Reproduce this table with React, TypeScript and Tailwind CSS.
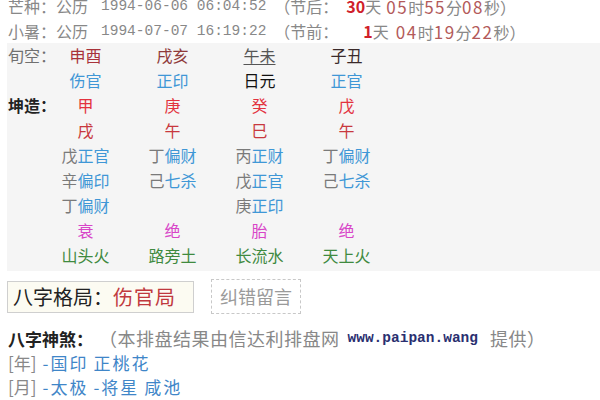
import React from "react";

const sans = { fontFamily: '"Noto Sans CJK SC", "Noto Sans", sans-serif' };

type Cell = React.ReactNode;

function Row({ label, cells, labelBold }: { label?: string; cells: Cell[]; labelBold?: boolean }) {
  return (
    <div className="grid h-[25px] items-center grid-cols-[35px_87px_87px_87px_87px]">
      <div className={`whitespace-nowrap pl-[1px] ${labelBold ? "font-bold text-[#222]" : "text-[#707070]"}`}>{label ?? ""}</div>
      {cells.map((c, i) => (
        <div key={i} className="text-center whitespace-nowrap">
          {c}
        </div>
      ))}
    </div>
  );
}

const B = ({ children }: { children: React.ReactNode }) => <span className="text-[#3f97d6]">{children}</span>;
const G = ({ children }: { children: React.ReactNode }) => <span className="text-[#7a7a7a]">{children}</span>;
const Hid = ({ s, t }: { s: string; t: string }) => (
  <span>
    <G>{s}</G>
    <B>{t}</B>
  </span>
);

const D = ({ children }: { children: React.ReactNode }) => (
  <span className="text-[#b35a5a] text-[17px] tracking-[1.5px]">{children}</span>
);

export default function App() {
  return (
    <div className="w-[600px] h-[400px] overflow-hidden bg-white text-[16px] leading-[25px]" style={sans}>
      <div className="-mt-[6px]">
        <div className="h-[25px] pl-[8px] whitespace-nowrap text-[#888] flex items-center">
          <span>芒种：公历</span>
          <span className="font-['Liberation_Mono'] text-[14.5px] ml-[13px]">1994-06-06 06:04:52</span>
          <span className="ml-[8px]">（节后：</span>
          <span className="ml-[8px] font-bold text-[#d0202a]">30</span>
          <span>天</span>
          <span className="ml-[5px]">
            <D>05</D>时<D>55</D>分<D>08</D>秒）
          </span>
        </div>
        <div className="h-[25px] pl-[8px] whitespace-nowrap text-[#888] flex items-center">
          <span>小暑：公历</span>
          <span className="font-['Liberation_Mono'] text-[14.5px] ml-[13px]">1994-07-07 16:19:22</span>
          <span className="ml-[8px]">（节前：</span>
          <span className="ml-[25px] font-bold text-[#d0202a]">1</span>
          <span>天</span>
          <span className="ml-[7px]">
            <D>04</D>时<D>19</D>分<D>22</D>秒）
          </span>
        </div>
      </div>
      <div className="ml-[7px] mt-[-1px] bg-[#f5f5f5] pb-[3px]">
        <Row
          label="旬空："
          cells={[
            <span className="text-[#a8323a]">申酉</span>,
            <span className="text-[#8f3a3a]">戌亥</span>,
            <span className="text-[#555] underline underline-offset-2">午未</span>,
            <span className="text-[#3a2a2a]">子丑</span>,
          ]}
        />
        <Row
          cells={[
            <B>伤官</B>,
            <B>正印</B>,
            <span className="text-[#111]">日元</span>,
            <B>正官</B>,
          ]}
        />
        <Row
          label="坤造："
          labelBold
          cells={["甲", "庚", "癸", "戊"].map((c) => (
            <span className="text-[#e3323e]">{c}</span>
          ))}
        />
        <Row
          cells={["戌", "午", "巳", "午"].map((c) => (
            <span className="text-[#c8383e]">{c}</span>
          ))}
        />
        <Row
          cells={[
            <Hid s="戊" t="正官" />,
            <Hid s="丁" t="偏财" />,
            <Hid s="丙" t="正财" />,
            <Hid s="丁" t="偏财" />,
          ]}
        />
        <Row
          cells={[
            <Hid s="辛" t="偏印" />,
            <Hid s="己" t="七杀" />,
            <Hid s="戊" t="正官" />,
            <Hid s="己" t="七杀" />,
          ]}
        />
        <Row cells={[<Hid s="丁" t="偏财" />, "", <Hid s="庚" t="正印" />, ""]} />
        <Row
          cells={["衰", "绝", "胎", "绝"].map((c) => (
            <span className="text-[#d845c8]">{c}</span>
          ))}
        />
        <Row
          cells={["山头火", "路旁土", "长流水", "天上火"].map((c) => (
            <span className="text-[#3f8a3f]">{c}</span>
          ))}
        />
      </div>
      <div className="flex items-center gap-[17px] ml-[7px] mt-[8px]">
        <div className="h-[32px] w-[187px] border border-[#cfcfcf] bg-[#fcfbf2] flex items-center pl-[5px] text-[20px] whitespace-nowrap">
          <span className="text-[#222]">八字格局：</span>
          <span className="text-[#c0393e] tracking-[1px]">伤官局</span>
        </div>
        <div className="h-[35px] w-[90px] border border-dashed border-[#c8c8c8] flex items-center justify-center text-[18px] text-[#9a9a9a]">
          纠错留言
        </div>
      </div>
      <div className="mt-[12px] pl-[8px] h-[25px] whitespace-nowrap flex items-center">
        <span className="font-bold text-[17px] text-[#222]">八字神煞：</span>
        <span className="text-[#888] text-[18px] tracking-[0.5px] ml-[6px]">（本排盘结果由信达利排盘网</span>
        <span className="font-['Liberation_Mono'] font-bold text-[14.5px] text-[#2a2f70] ml-[8px]">www.paipan.wang</span>
        <span className="text-[#888] text-[18px] tracking-[0.5px] ml-[12px]">提供）</span>
      </div>
      <div className="pl-[8px] h-[24px] leading-[24px] whitespace-nowrap flex items-center text-[17px]">
        <span className="text-[#888]">[年]</span>
        <span className="text-[#3f86c8] ml-[6px] tracking-[2px]">-国印</span>
        <span className="text-[#3f86c8] ml-[5px] tracking-[2px]">正桃花</span>
      </div>
      <div className="pl-[8px] h-[24px] leading-[24px] whitespace-nowrap flex items-center text-[17px]">
        <span className="text-[#888]">[月]</span>
        <span className="text-[#3f86c8] ml-[6px] tracking-[2px]">-太极</span>
        <span className="text-[#3f86c8] ml-[5px] tracking-[2px]">-将星</span>
        <span className="text-[#3f86c8] ml-[5px] tracking-[2px]">咸池</span>
      </div>
    </div>
  );
}
